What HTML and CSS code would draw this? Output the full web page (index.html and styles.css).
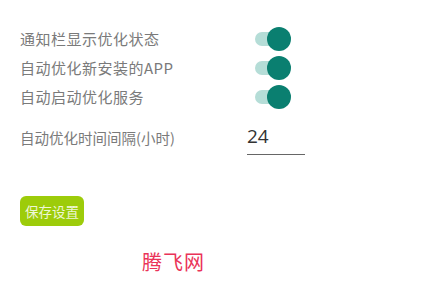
FILE: index.html
```html
<!DOCTYPE html>
<html lang="zh-CN">
<head>
    <meta charset="UTF-8">
    <title>优化设置</title>
    <link rel="stylesheet" href="styles.css">
</head>
<body>
    <div class="settings">
        <div class="row">
            <span class="label">通知栏显示优化状态</span>
            <span class="switch"><span class="track"></span><span class="thumb"></span></span>
        </div>
        <div class="row">
            <span class="label">自动优化新安装的APP</span>
            <span class="switch"><span class="track"></span><span class="thumb"></span></span>
        </div>
        <div class="row">
            <span class="label">自动启动优化服务</span>
            <span class="switch"><span class="track"></span><span class="thumb"></span></span>
        </div>
        <div class="row interval">
            <span class="label">自动优化时间间隔(小时)</span>
            <span class="field">24</span>
        </div>
        <button class="save">保存设置</button>
        <div class="brand">腾飞网</div>
    </div>
</body>
</html>
```

FILE: styles.css
```css
body {
    margin: 0;
    background: #fff;
    font-family: "Noto Sans CJK SC", "Liberation Sans", sans-serif;
}

.settings {
    padding: 24px 0 0 20px;
}

.row {
    display: flex;
    align-items: center;
    height: 29px;
}

.label {
    width: 235px;
    font-size: 15px;
    color: #7a7a7a;
    letter-spacing: 0.5px;
}

.switch {
    position: relative;
    width: 36px;
    height: 24px;
}

.track {
    position: absolute;
    left: 0;
    top: 5px;
    width: 30px;
    height: 14px;
    border-radius: 7px;
    background: #b5ddd7;
}

.thumb {
    position: absolute;
    left: 12px;
    top: 0;
    width: 24px;
    height: 24px;
    border-radius: 50%;
    background: #0a7f70;
}

.interval {
    margin-top: 11px;
    height: 30px;
}

.interval .label {
    width: 227px;
    font-size: 14.5px;
    letter-spacing: 0;
}

.field {
    width: 58px;
    margin-top: 4px;
    padding-bottom: 6px;
    border-bottom: 1.5px solid #666;
    font-family: "Open Sans", "Liberation Sans", sans-serif;
    font-size: 19px;
    color: #333;
    line-height: 24px;
}

.save {
    display: block;
    margin-top: 44px;
    width: 64px;
    height: 30px;
    padding: 0;
    border: none;
    border-radius: 6px;
    background: #9dcc0a;
    color: #eef7d6;
    font-family: "Noto Sans CJK SC", sans-serif;
    font-size: 13.5px;
}

.brand {
    margin: 21px 0 0 122px;
    font-size: 20px;
    color: #ea3358;
    letter-spacing: 1px;
}
```
